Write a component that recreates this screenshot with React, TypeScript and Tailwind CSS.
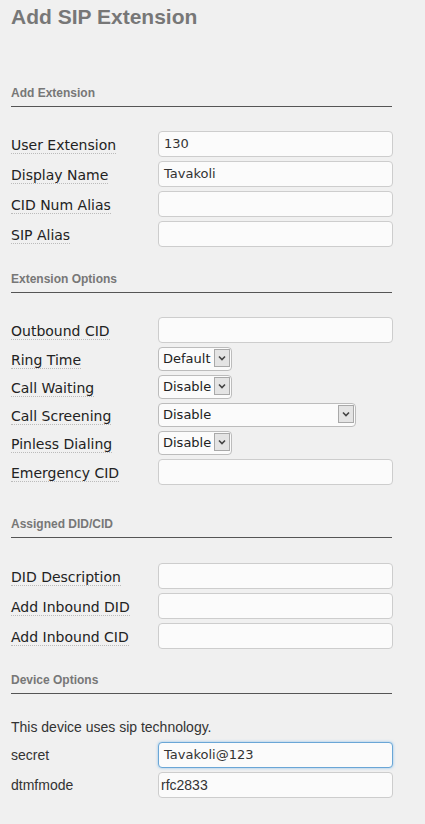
import React from 'react';

const labelFont = { fontFamily: '"DejaVu Sans", Verdana, sans-serif' };
const arialFont = { fontFamily: '"Liberation Sans", Arial, sans-serif' };

function SectionHeader({ title, className = '' }: { title: string; className?: string }) {
  return (
    <div className={`w-[381px] border-b border-[#555] pb-[6px] ${className}`}>
      <div className="text-[12px] leading-[14px] font-bold text-[#777]" style={arialFont}>
        {title}
      </div>
    </div>
  );
}

function Label({ text }: { text: string }) {
  return (
    <div className="w-[147px] shrink-0">
      <span
        className="inline-block text-[14px] leading-[16px] text-[#222] border-b border-dotted border-[#bbb]"
        style={labelFont}
      >
        {text}
      </span>
    </div>
  );
}

function TextInput({ value = '', focused = false, arial = false }: { value?: string; focused?: boolean; arial?: boolean }) {
  return (
    <div
      className={`w-[235px] h-[26px] rounded-[4px] border bg-[#fbfbfb] flex items-center ${
        arial ? 'pl-[2px] text-[14px]' : 'pl-[5px] text-[13px]'
      } text-[#333] ${focused ? 'border-[#6aa6d6] shadow-[0_0_3px_rgba(102,175,233,0.7)]' : 'border-[#cdcdcd]'}`}
      style={arial ? arialFont : labelFont}
    >
      {value}
    </div>
  );
}

function Select({ value, wide = false }: { value: string; wide?: boolean }) {
  return (
    <div
      className={`${wide ? 'w-[198px]' : 'w-[74px]'} h-[24px] rounded-[4px] border border-[#bcbcbc] bg-[#fbfbfb] flex items-start justify-between pl-[4px] pr-[1px] pt-[1px]`}
    >
      <span className="text-[13px] leading-[19px] text-[#222]" style={labelFont}>
        {value}
      </span>
      <div className="w-[16px] h-[18px] bg-[#e4e4e4] border border-[#a9a9a9] flex items-center justify-center">
        <svg width="8" height="6" viewBox="0 0 8 6">
          <path d="M1 1.5 L4 4.5 L7 1.5" fill="none" stroke="#444" strokeWidth="1.6" />
        </svg>
      </div>
    </div>
  );
}

function Row({ label, children }: { label: string; children: React.ReactNode }) {
  return (
    <div className="flex items-center">
      <Label text={label} />
      {children}
    </div>
  );
}

function PlainRow({ label, children }: { label: string; children: React.ReactNode }) {
  return (
    <div className="flex items-center">
      <div className="w-[147px] shrink-0 text-[14px] text-[#333]" style={arialFont}>
        {label}
      </div>
      {children}
    </div>
  );
}

export default function App() {
  return (
    <div className="min-h-screen bg-[#f0f0f0] pl-[11px] pb-[40px]">
      {/* Title */}
      <h1 className="pt-[5px] text-[21px] leading-[24px] font-bold text-[#777]" style={arialFont}>
        Add SIP Extension
      </h1>

      {/* Add Extension */}
      <SectionHeader title="Add Extension" className="mt-[57px]" />
      <div className="mt-[24px] flex flex-col gap-[4px]">
        <Row label="User Extension">
          <TextInput value="130" />
        </Row>
        <Row label="Display Name">
          <TextInput value="Tavakoli" />
        </Row>
        <Row label="CID Num Alias">
          <TextInput />
        </Row>
        <Row label="SIP Alias">
          <TextInput />
        </Row>
      </div>

      {/* Extension Options */}
      <SectionHeader title="Extension Options" className="mt-[25px]" />
      <div className="mt-[24px] flex flex-col gap-[4px]">
        <Row label="Outbound CID">
          <TextInput />
        </Row>
        <Row label="Ring Time">
          <Select value="Default" />
        </Row>
        <Row label="Call Waiting">
          <Select value="Disable" />
        </Row>
        <Row label="Call Screening">
          <Select value="Disable" wide />
        </Row>
        <Row label="Pinless Dialing">
          <Select value="Disable" />
        </Row>
        <Row label="Emergency CID">
          <TextInput />
        </Row>
      </div>

      {/* Assigned DID/CID */}
      <SectionHeader title="Assigned DID/CID" className="mt-[32px]" />
      <div className="mt-[25px] flex flex-col gap-[4px]">
        <Row label="DID Description">
          <TextInput />
        </Row>
        <Row label="Add Inbound DID">
          <TextInput />
        </Row>
        <Row label="Add Inbound CID">
          <TextInput />
        </Row>
      </div>

      {/* Device Options */}
      <SectionHeader title="Device Options" className="mt-[24px]" />
      <div className="mt-[25px] text-[14px] leading-[16px] text-[#333]" style={arialFont}>
        This device uses sip technology.
      </div>
      <div className="mt-[7px] flex flex-col gap-[4px]">
        <PlainRow label="secret">
          <TextInput value="Tavakoli@123" focused />
        </PlainRow>
        <PlainRow label="dtmfmode">
          <TextInput value="rfc2833" arial />
        </PlainRow>
      </div>
    </div>
  );
}
